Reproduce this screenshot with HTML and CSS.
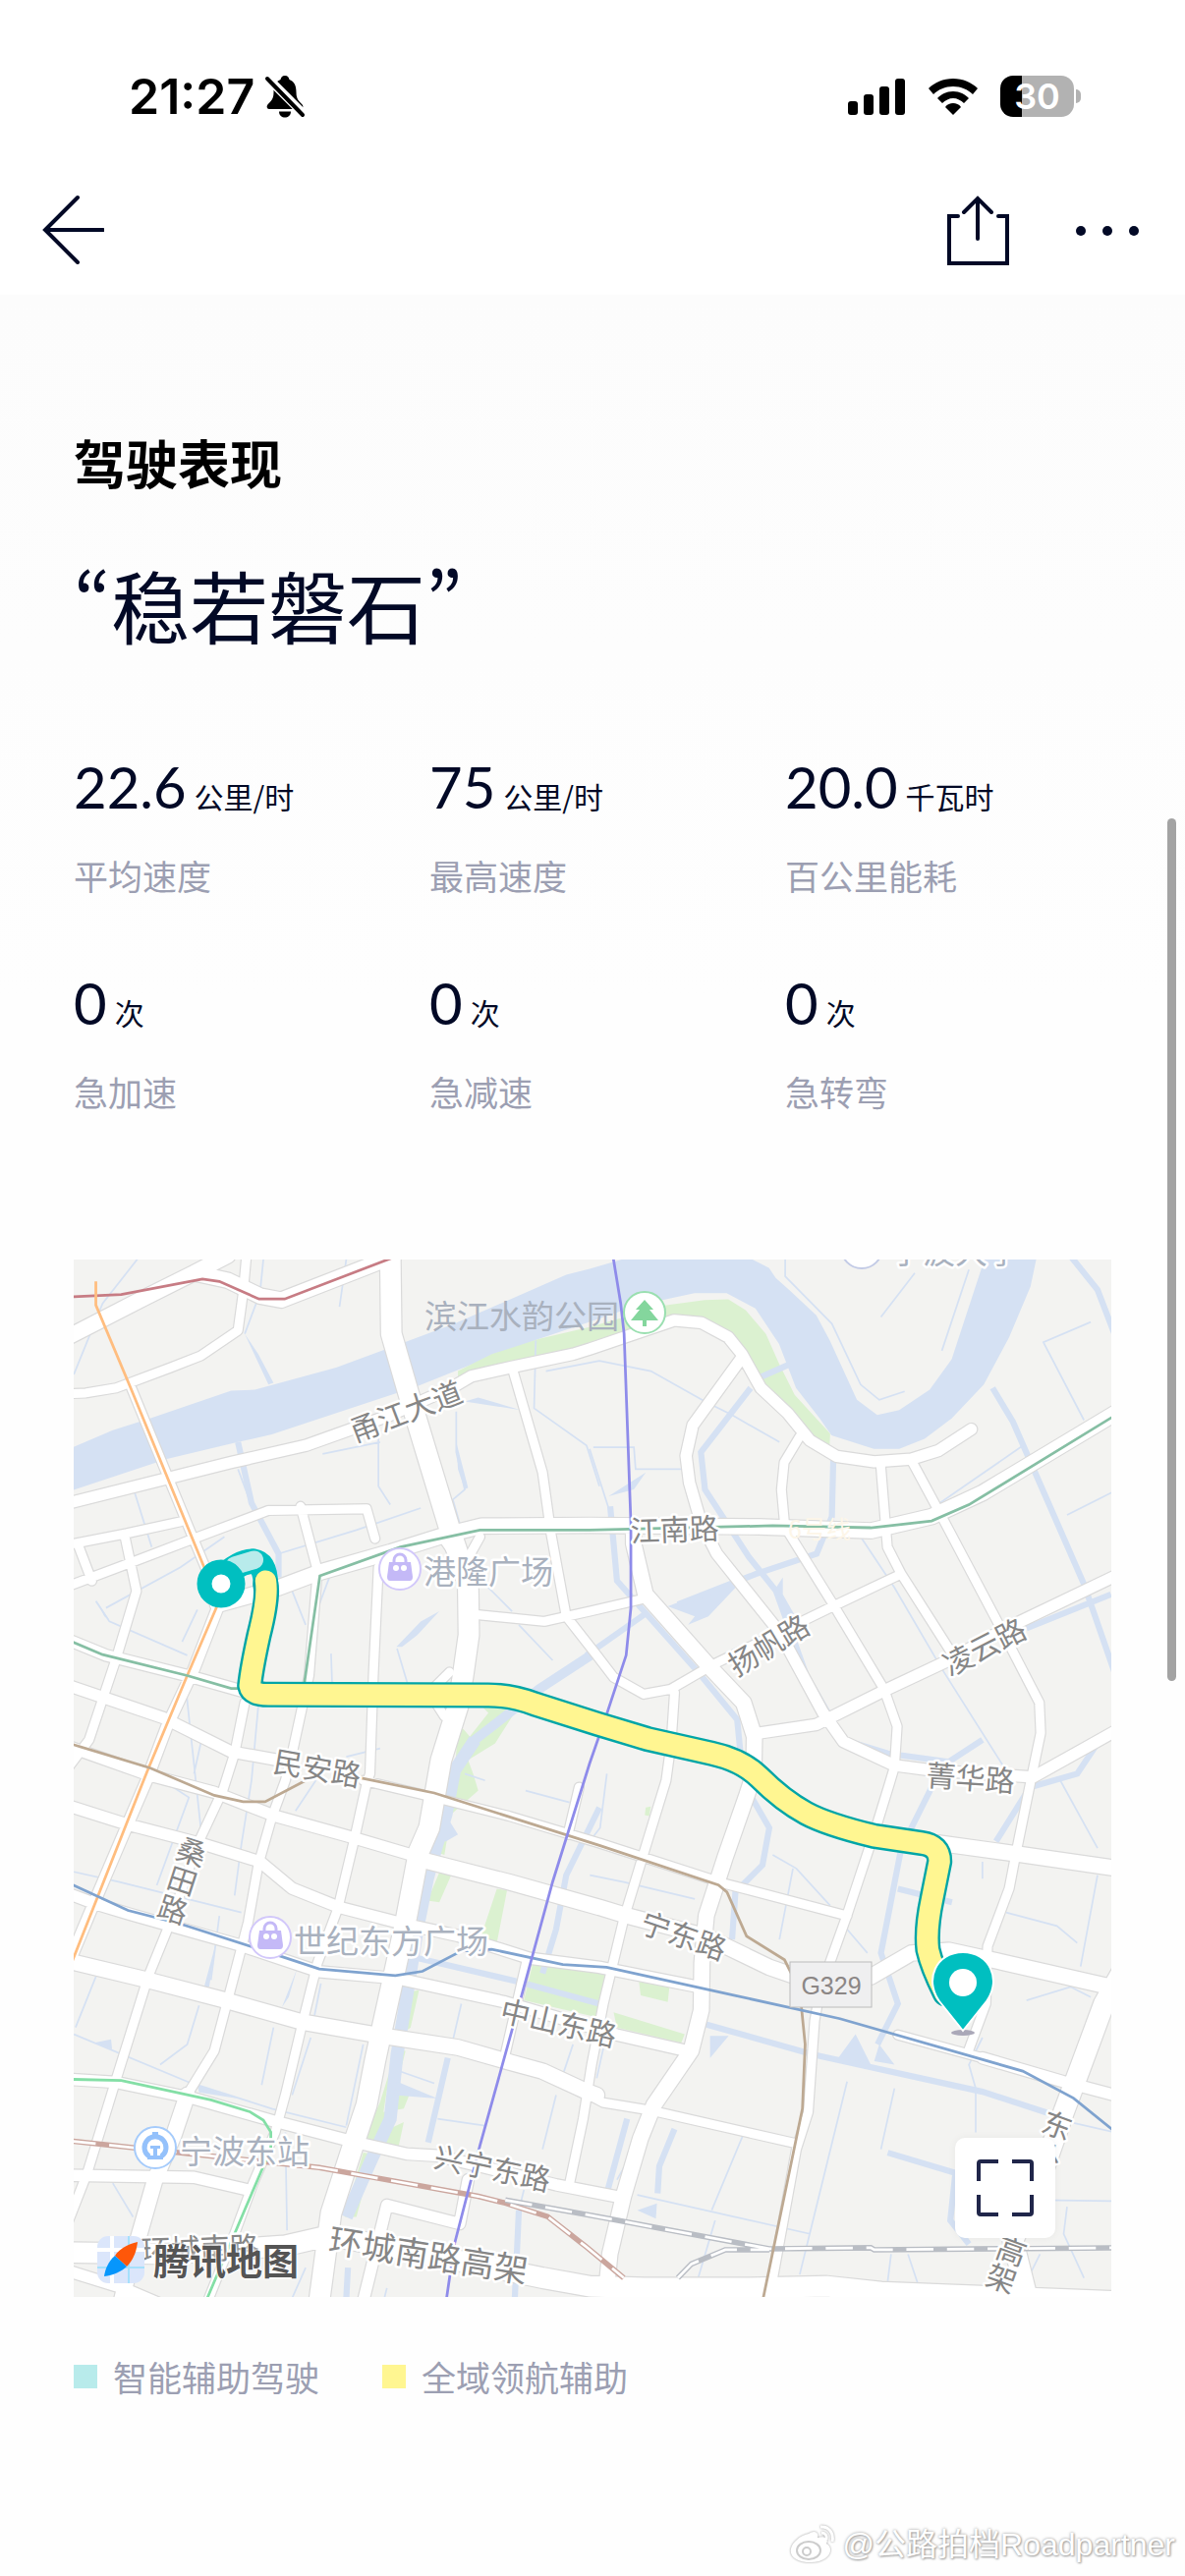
FILE: index.html
```html
<!DOCTYPE html>
<html lang="zh-CN">
<head>
    <meta charset="UTF-8" />
    <meta name="viewport" content="width=device-width, initial-scale=1.0" />
    <title>驾驶表现</title>
    <link rel="stylesheet" href="styles.css">
</head>
<body>
    <header class="top">
        <div class="status-bar">
            <div class="status-left">
                <span class="clock">21:27</span>
                <svg class="bell" viewBox="0 0 42 44" width="42" height="44">
                    <path d="M21 1c-3 0-4 2-4.500 4C11 7 9.500 12 9.500 18c0 7-3 9-6.500 13-1 2 0 4 2 4h32c2 0 3-2 2-4-3.500-4-6.500-6-6.500-13 0-6-1.500-11-7-13-.5-2-1.500-4-4.500-4zM15 37.500h12c0 4-3 6-6 6s-6-2-6-6z" />
                    <path class="cut" d="M3 3L41 41" />
                    <path class="slash" d="M3 4L39 41" />
                </svg>
            </div>
            <div class="status-right">
                <svg viewBox="0 0 59 38" width="59" height="38">
                    <rect x="0" y="24" width="10" height="14" rx="3" />
                    <rect x="16" y="17" width="10" height="21" rx="3" />
                    <rect x="32" y="9" width="10" height="29" rx="3" />
                    <rect x="48" y="1" width="10" height="37" rx="3" />
                </svg>
                <svg viewBox="0 0 52 38" width="52" height="38">
                    <path d="M26 1C16 1 7 5 1 11l5 6C11 12 18 9 26 9s15 3 20 8l5-6C45 5 36 1 26 1z" />
                    <path d="M26 14c-7 0-12 3-16 7l5 5c3-3 7-5 11-5s8 2 11 5l5-5c-4-4-9-7-16-7z" />
                    <path d="M26 26c-3 0-6 1-8 4l8 8 8-8c-2-3-5-4-8-4z" />
                </svg>
                <div class="battery"><span>30</span></div>
            </div>
        </div>
        <nav class="nav-bar">
            <button class="icon-btn" aria-label="返回">
                <svg viewBox="0 0 64 72" width="64" height="72"><path d="M37 3L4 36l33 33M4 36h59" /></svg>
            </button>
            <div class="nav-actions">
                <button class="icon-btn" aria-label="分享">
                    <svg viewBox="0 0 64 72" width="64" height="72"><path d="M12 22H3v48h59V22H53M32 45V4M18 18L32 4l14 14" /></svg>
                </button>
                <button class="icon-btn dots" aria-label="更多">
                    <svg viewBox="0 0 66 72" width="66" height="72"><circle cx="6" cy="37" r="5" /><circle cx="33" cy="37" r="5" /><circle cx="60" cy="37" r="5" /></svg>
                </button>
            </div>
        </nav>
    </header>

    <main class="content">
        <h1>驾驶表现</h1>
        <p class="rating">“稳若磐石”</p>

        <dl class="stats">
            <div class="stat"><dd>22.6<span>公里/时</span></dd><dt>平均速度</dt></div>
            <div class="stat"><dd>75<span>公里/时</span></dd><dt>最高速度</dt></div>
            <div class="stat"><dd>20.0<span>千瓦时</span></dd><dt>百公里能耗</dt></div>
            <div class="stat"><dd>0<span>次</span></dd><dt>急加速</dt></div>
            <div class="stat"><dd>0<span>次</span></dd><dt>急减速</dt></div>
            <div class="stat"><dd>0<span>次</span></dd><dt>急转弯</dt></div>
        </dl>

        <div class="map">
            <svg class="map-canvas" viewBox="0 0 1056 1056">
                <defs>
                    <!-- roads, by width: drawn once as casing and once as surface -->
                    <path id="roads-s" d="M525 10L515 120L500 230L390 305L300 340L140 400L50 415L0 417M185 400L300 680L370 850L420 970M0 985L200 910L370 845L590 762L880 757L905 845M0 863L170 830L330 795M165 835L200 1000L140 1200L60 1440L0 1520M30 870L68 970M685 750L735 940L710 1250L660 1480L640 1560L600 1669L560 1809L530 1979L475 2189L430 2359L350 2489M915 930L900 1250L890 1540L880 1569L845 1729L795 1939L735 2099L690 2279L640 2489L610 2599L545 2750L490 2900L410 3100M520 1330L490 1480L455 1590L380 1750L300 1979L235 2139L135 2459L55 2719L0 2860M1508 1580L1475 1720M1355 2085L1285 2390M1790 1300L1780 1450L1765 1560L1710 1739L1640 1969L1580 2219L1545 2400L1520 2560L1480 2750M2159 545L2114 620L2106 700L2116 810L2259 1040L2409 1290L2448 1400L2440 1520L2425 1570L2385 1700L2299 1960L2220 2180L2204 2270L2185 2540L2150 2650L2068 3100M2399 625L2419 870L2460 950L2610 1185M2489 612L2585 790L2749 1100L2868 1330L2872 1420L2845 1550L2800 1770L2779 1879L2715 2050L2710 2220L2660 2355M2459 950L2259 1045L1909 1215L1779 1290L1699 1305L1610 1255L1560 1190L1470 1075L1425 830L1400 650L1310 340M1205 1070L1405 1090L1539 1060L1690 1025M1125 1240L1065 1300L1110 1370M1110 850L1165 930L1215 840M870 1560L1080 1610L1300 1665L1568 1745L1939 1865L2300 1960M2450 2312L2700 2380M1539 2490L1579 2512L1720 2535L2145 2632" />
                    <path id="roads-m" d="M0 740L280 670L480 620L700 570L840 520L950 480L1130 400L1190 365L1310 338L1490 300L1539 285L1789 200L1869 207L1949 250L1989 300L2045 400L2125 475L2190 555L2269 602L2380 618L2490 610L2570 585L2667 522M440 1050L370 1230L290 1400L230 1560L170 1699L65 1945L0 2100M0 1145L110 1190L350 1250L510 1295M0 1280L280 1375L480 1475L620 1500M0 1635L170 1689L400 1749L565 1800L660 1879L800 1935L990 1984L1150 2019L1360 2085L1568 2112L1860 2170M0 1460L240 1545L430 1595L610 1665L840 1729L1030 1785M0 1895L80 1925L180 1955L500 2045L740 2125L970 2145L1290 2215L1620 2312L1830 2360M0 2443L140 2452L370 2500L600 2565L850 2630L1000 2664L1090 2669L1440 2755L1620 2790M0 2727L370 2733L530 2770M1180 2740L1155 2870L940 2815L870 3100M1989 310L1844 510L1824 600L1834 680L1869 800L1915 890L2099 1120L2229 1360L2289 1445L2439 1515L2550 1530L2850 1550L3100 1410M2039 1420L2209 1395L2419 1290L2600 1205L2770 1110L3100 952M2700 2380L2939 2450L3100 2492M0 3010L160 3060L300 3120" />
                    <path id="roads-l" d="M0 248L220 135L370 60L470 82L565 128L628 140L880 42L960 10M370 60L470 8M440 1040L620 990L740 945L950 885L1110 835L1220 808L1539 806L2040 810L2370 822L2550 780L2700 710L3100 470M1669 830L1669 860L1704 1010L1899 1230L1994 1330L2026 1430L2024 1540L2005 1600L1939 1789L1884 1959L1871 2099L1869 2239L1839 2359L1729 2519L1689 2619L1639 2789L1599 2959L1589 3060M1040 1794L1300 1860L1568 1935L1650 1960L1880 2020L2070 2112L2180 2150L2370 2140L2490 2070L2600 2062L2750 2095L3100 2175M2569 1745L2809 1778L3100 1820M0 2094L230 2149L460 2209L690 2274L920 2314L1150 2349L1290 2389L1400 2419L1530 2479L1560 2490M350 2490L310 2609L255 2739L215 2879L180 3000L155 3100" />
                    <path id="roads-xl" d="M950 0L953 240L1005 420L1125 815L1180 980L1182 1130L1165 1250L1150 1340L1100 1500L1065 1700L1035 1769L995 1979L960 2139L920 2319L905 2389L880 2519L840 2639L775 2839L740 3100M0 2955L300 2959L640 2935L770 2905L980 2945L1180 2985L1400 3030L1539 3055L1700 3060L2000 3060L2240 3055L2400 3072L2600 3080L3100 3100M3110 2130L3059 2220L2985 2420L2940 2540L2870 2740L2790 2920L2830 3080" />
                </defs>

                <g transform="translate(-5 -7) scale(.3444)">
                    <!-- water and parks -->
                    <path class="water" d="M0 580L130 525L240 490L480 408L550 405L790 340L1000 262L1140 210L1470 65L1539 48L1669 10H2000L2069 45L2089 75L2129 110L2209 185L2249 260L2329 435L2389 480L2454 465L2544 405L2609 315L2709 10H2861L2842 100L2779 250L2704 390L2609 490L2529 550L2454 580H2379L2254 540L2219 490L2149 400L2099 270L2029 165L1944 120H1849L1754 140L1640 170L1539 205L1390 255L1180 335L1030 395L600 537L500 560L290 610L0 706z" />
                    <path class="park" d="M1150 350L1250 300L1390 255L1539 220L1765 155L1879 140L1949 138L2000 170L2060 240L2100 330L2145 420L2250 535L2248 575L2190 560L2040 400L1989 290L1949 250L1869 207L1780 210L1310 330L1190 365L1150 375z" />
                    <path class="park" d="M1150 1390L1185 1430L1240 1360L1220 1340H1330L1260 1450L1180 1500L1195 1540L1210 1590L1130 1660L1110 1780L1080 1770L1130 1600L1140 1560zM1100 1820L1130 1840L1095 1920L1060 1915zM1265 1880L1295 1885L1265 2040L1215 2030zM1370 2105L1610 2130L1560 2260L1345 2210zM1005 2185L1035 2180L1010 2290L970 2320zM970 2350L995 2360L960 2500L925 2600L990 2570L975 2640L870 2625L920 2510zM1610 2245L1820 2310L1810 2335L1620 2290zM1685 2155L1775 2170L1770 2215L1690 2195zM870 2660L900 2665L850 2850H815zM1010 2480L940 2475L930 2540L990 2530zM1705 1640L1720 1637L1715 1665L1702 1662z" />
                    <path class="canal wide" d="M1200 1440L1140 1530L1115 1660L1085 1760L1060 1850L1030 2000L1000 2190L970 2370L950 2560L890 2690L820 2850" />
                    <path class="canal mid" d="M1550 1185L1390 1290L1290 1370L1200 1440L1140 1530" />
                    <path class="water" d="M1100 1640L1150 1720L1115 1740L1075 1740zM970 2450L1090 2500L960 2490zM1770 1045L1930 985L1980 980L1890 1075L1830 1100L1850 1075zM2325 2310L2270 2385L2370 2400zM2395 2340L2440 2400L2380 2390zM1895 2315H1950L1895 2380zM1680 2830L1738 2810L1735 2855zM968 1165L1040 1090L1095 1060L1030 1130L985 1165zM80 1025L120 1085L105 1075zM590 390L520 240L560 300L605 385zM1170 700L1150 640L1145 560L1180 695zM1595 720L1705 650L1670 700zM1170 440L1210 428L1335 465zM75 2335L125 2325L128 2355zM380 2460L500 2500L385 2482zM400 2170L435 2040L415 2170zM630 2230L675 2115L650 2200zM2090 990L2110 960V1010L2150 1080L2115 1090z" />
                    <path class="canal" d="M2260 580L2255 780L2210 890L2030 950L1800 1040M2130 330L2040 370M2015 400L1868 590L1880 700L2010 900L2090 1000L2180 1250L2290 1440L2420 1480L2600 1505L2700 1440M2730 400L2790 500L3000 980L3090 1240M2960 10L3040 110L3090 240M1600 750L1620 970L1700 1060L1860 1240L1975 1380L1985 1480M1700 1070L1530 1190M2550 1580L2460 1760L2400 2070L2450 2220L2390 2340M1880 2280L2200 2370L2700 2480L2900 2545M2420 2660L2620 2720L2605 2860L2660 2930M1030 2085L1330 2155L1568 2220M1120 2380L1062 2630M1568 1640L1470 1840L1440 2000L1400 2130M2018 1610L2070 1700L2050 1810L1970 1890L1960 2030M1330 2830L1318 3090M1650 2560L1590 2780M1790 2590L1745 2700L1740 2780M825 3000L820 3090M500 560L540 740L620 890V960M2450 1880L2610 1920M2830 1110L3080 1010M2740 1740L2840 1580L2980 1540L3060 1420" />
                    <path class="canal thin" d="M210 10L100 150L15 360M575 20L565 120L520 240M820 20L800 160M195 710L245 870M620 890L850 820L1040 755M500 640L545 760M110 1050L330 930L460 840M80 1030L120 1090L350 1190M380 1055L335 1150M740 1040L770 960M660 1000L700 1100M775 1185L778 1270M970 1170L1000 1270M915 500V690L950 745M1145 470V590L1170 700L1135 730L1155 800M1380 260L1375 460L1530 570L1568 690M750 595L920 560M1230 980L1310 1060M1330 1100L1430 1205M1410 350L1568 320L1720 350L1880 440L1960 480L2100 560M1550 575H1670L1675 640H1810M1539 580L1600 770M2117 20V70L2255 210L2340 390L2395 435L2470 410M2660 50L2580 290M2500 60L2400 190M3020 205L2880 265L3000 495M2545 760L2820 570M2950 775L3090 705M2340 840L2440 990L2580 1230L2760 1515M270 1555L355 1610L260 1870M15 1830L150 1860L510 1950M340 1230L390 1700M390 1450L370 1540M560 1340L540 1560L510 1750L490 1900M730 1560L670 1650M820 1490L920 1465M1350 1590L1480 1625M445 1960L420 2150M80 2140L20 2290M15 2310L350 2450L600 2530L820 2585M385 2225L350 2340L270 2400M605 2290L570 2460M745 2160L725 2260M870 2340L820 2580M715 2320L660 2490M1160 2220L1130 2350M980 2420L1080 2455M1090 2560L1230 2580M1440 2490L1400 2650M1490 2340L1460 2430M130 2750L190 2850M640 2600L645 2890M1345 2770L1330 2830M2140 1820L2100 2030M2080 1780L2150 1820L2250 1930M2300 2000L2360 2070M1540 1840L1640 1860L1850 1910M2000 2590L1900 2830M2300 2450L2160 3020M2440 2470L2400 2650M1680 2785L2190 2900M1910 2860L1860 3030M1590 1540L1570 1700L1539 1740M2930 1560L3040 1760M2770 1950L2920 1990L2980 2040M2830 2210L2960 2170L3020 2200M3040 1840L2990 2110M2700 2320L2660 2400L2680 2470V2600M1560 2440L1580 2350M1700 2600L1620 2740M2430 2960L2420 3040M2480 2960L2510 3050M2950 2820L2940 2900L3000 3030M2880 2800L3090 2803M2960 2570L3090 2600M2870 2960L2840 3020M2700 1800V1850M1230 1560L1170 1540M700 3000L660 3090M940 3060L930 3100" />

                    <use href="#roads-s" class="road casing s" />
                    <use href="#roads-m" class="road casing m" />
                    <use href="#roads-l" class="road casing l" />
                    <use href="#roads-xl" class="road casing xl" />
                    <use href="#roads-s" class="road s" />
                    <use href="#roads-m" class="road m" />
                    <use href="#roads-l" class="road l" />
                    <use href="#roads-xl" class="road xl" />

                    <!-- railways -->
                    <path class="rail brick" d="M0 2625L740 2704L850 2724L1210 2789L1290 2809L1415 2849L1530 2939L1640 3030" />
                    <path class="rail grey" d="M1290 2800L1568 2850L2070 2944L2370 2941L2380 2947L3100 2941M1800 3030L1840 2989L1940 2947H2070" />
                    <path class="rail gap" d="M0 2625L740 2704L850 2724L1210 2789L1290 2809L1415 2849L1530 2939L1640 3030M1290 2800L1568 2850L2070 2944L2370 2941L2380 2947L3100 2941M1800 3030L1840 2989L1940 2947H2070" />

                    <!-- metro lines -->
                    <g class="metro">
                        <path stroke="#c77c84" d="M0 131L155 124L395 78L445 85L562 137H638L970 10" />
                        <path stroke="#ffbd7f" d="M80 85V155L185 405L400 930L440 1040L350 1250L235 1525L215 1575L85 1905L10 2095" />
                        <path stroke="#86bfa4" d="M0 1146L100 1188L350 1250L480 1288H510M695 1280L742 955L980 870L1215 820H1539L2080 807L2370 813L2550 793L2660 745L3100 476" />
                        <path stroke="#bda992" d="M0 1450L240 1523L430 1604L515 1623H580L700 1560M865 1553L1080 1597L1568 1752L1920 1869L1945 1890L2003 2020L2115 2090L2160 2180L2176 2340L2168 2530L2050 3100" />
                        <path stroke="#7fa3cf" d="M0 1863L175 1944L330 1984L540 2051L740 2117L965 2137L1045 2124L1160 2064L1250 2059L1460 2104L1589 2112L2279 2264L2819 2419L2969 2499L3100 2605" />
                        <path stroke="#8e8bea" d="M1608 10L1631 150L1641 240L1661 800V1050L1647 1190L1591 1360L1539 1510L1430 1859L1340 2189L1215 2639L1140 2929L1115 3100" />
                        <path stroke="#84dfa6" d="M0 2443L155 2447L420 2504L535 2539L575 2564L597 2599V2649L520 2829L405 3100" />
                    </g>

                    <!-- driven route -->
                    <path class="route start" d="M450 965Q500 912 545 912Q582 918 582 985" />
                    <path class="route edge" d="M582 980Q590 1020 562 1130Q540 1230 535 1280Q540 1306 590 1306L1240 1308Q1310 1308 1380 1335L1560 1392L1709 1437L1900 1480Q1990 1500 2040 1550Q2110 1620 2179 1657Q2240 1690 2379 1724L2520 1745Q2574 1752 2573 1800L2551 1910Q2532 2000 2539 2060Q2550 2110 2590 2190" />
                    <path class="route assist" d="M490 925L548 908" />
                    <path class="route pilot" d="M582 970Q590 1020 562 1130Q540 1230 535 1280Q540 1306 590 1306L1240 1308Q1310 1308 1380 1335L1560 1392L1709 1437L1900 1480Q1990 1500 2040 1550Q2110 1620 2179 1657Q2240 1690 2379 1724L2520 1745Q2574 1752 2573 1800L2551 1910Q2532 2000 2539 2060Q2550 2110 2590 2190" />
                </g>

                <g class="road-name">
                    <text transform="translate(342 165) rotate(-21)">甬江大道</text>
                    <text transform="translate(612 286) rotate(-2)">江南路</text>
                    <text transform="translate(713 402) rotate(-31)">扬帆路</text>
                    <text transform="translate(932 404) rotate(-27)">凌云路</text>
                    <text transform="translate(912 539) rotate(4)">菁华路</text>
                    <text transform="translate(246 529) rotate(10)">民安路</text>
                    <g transform="translate(107 643) rotate(18)"><text y="-31">桑</text><text>田</text><text y="31">路</text></g>
                    <text transform="translate(617 699) rotate(19)">宁东路</text>
                    <text transform="translate(491 788) rotate(13)">中山东路</text>
                    <text transform="translate(424 936) rotate(12)">兴宁东路</text>
                    <text transform="translate(129 1018) rotate(-2)">环城南路</text>
                    <text class="big" transform="translate(359 1026) rotate(9)">环城南路高架</text>
                    <g transform="translate(997 892) rotate(20)"><text>东</text><text y="33">外</text><text y="66">环</text><text y="100">路</text><text y="136">高</text><text y="166">架</text></g>
                </g>
                <text class="line-name" x="759" y="284">6号线</text>

                <g class="place">
                    <text x="357" y="70">滨江水韵公园</text>
                    <text x="356" y="330">港隆广场</text>
                    <text x="224" y="706">世纪东方广场</text>
                    <text x="108" y="920">宁波东站</text>
                    <text x="831" y="4">宁波大学</text>
                </g>

                <circle class="poi campus" cx="802" cy="-12" r="21" />
                <circle class="poi tree" cx="581" cy="54" r="21" />
                <path fill="#84d69d" d="M581 41l9 10h-4l9 11h-12v6h-4v-6h-12l9-11h-4z" />
                <g id="bag">
                    <circle class="poi shop" cx="332" cy="315" r="21" />
                    <path fill="none" stroke="#c4b9f7" stroke-width="3" d="M326 309v-3a6 6 0 0 1 12 0v3" />
                    <path fill="#c4b9f7" d="M321 308h22l2 15q0 4-3 4h-20q-3 0-3-4z" />
                    <circle fill="#fff" cx="328" cy="314" r="3" /><circle fill="#fff" cx="336" cy="314" r="3" />
                </g>
                <use href="#bag" x="-132" y="375" />
                <circle class="poi station" cx="83" cy="904" r="21" />
                <path fill="none" stroke="#94c1fb" stroke-width="5" d="M77 913a11 11 0 1 1 12 0" />
                <path fill="#94c1fb" d="M80 888h6v5h-6zM78 902h10v3h-3v7h6v4H75v-4h6v-7h-3z" />

                <rect x="729" y="715" width="83" height="46" fill="#efeff0" stroke="#bcbcbc" />
                <text class="shield" x="771" y="748">G329</text>

                <!-- start and end markers -->
                <circle cx="150" cy="330" r="17" fill="#fff" stroke="#00bfc0" stroke-width="15" />
                <ellipse cx="905" cy="787" rx="12" ry="3" fill="#aaa8b8" />
                <path fill="#00bfc0" stroke="#fff" stroke-width="2" d="M905 785L881 755C865 733 878 705 905 705S945 733 929 755z" />
                <circle cx="905" cy="736" r="14" fill="#fff" />
            </svg>

            <div class="map-brand">
                <svg viewBox="0 0 48 48" width="48" height="48">
                    <rect width="48" height="48" rx="11" fill="#dbe6fb" />
                    <path stroke="#fff" stroke-width="4" d="M15 0v48M0 14h48" />
                    <path stroke="#a5e0fc" stroke-width="2" d="M0 32h48M32 0v48" />
                    <path fill="#fe5709" d="M41 6C32 8 22 13 18 20l12 11C37 24 40 15 41 6z" />
                    <path fill="#0696fc" d="M18 20C11 26 8 34 7 41c9-1 18-5 23-10z" />
                </svg>
                <span>腾讯地图</span>
            </div>
            <button class="expand-btn" aria-label="全屏">
                <svg viewBox="0 0 60 60" width="60" height="60"><path d="M23 3H5Q3 3 3 5v18M37 3h18q2 0 2 2v18M57 37v18q0 2-2 2H37M23 57H5q-2 0-2-2V37" /></svg>
            </button>
        </div>

        <ul class="legend">
            <li><i class="swatch assist"></i>智能辅助驾驶</li>
            <li><i class="swatch pilot"></i>全域领航辅助</li>
        </ul>
    </main>

    <footer class="credit">
        <svg viewBox="0 0 50 44" width="50" height="44">
            <path d="M21 11c5-4 11-2 9 4 7-2 12 1 9 6 9 5 3 19-16 19C9 40 1 34 3 26c1-6 10-14 18-15z" />
            <path class="wave" d="M33 4c8-1 14 6 12 15M34 10c4 0 6 3 5 7" />
            <ellipse class="eye" cx="21" cy="28" rx="12" ry="9" /><circle class="eye" cx="19" cy="29" r="4" />
        </svg>
        <span>@公路拍档Roadpartner</span>
    </footer>
    <div class="scroll-thumb"></div>
</body>
</html>
```
FILE: styles.css
```css
:root {
    --ink: #020926;
    --muted: #9c9fb2;
    --teal: #00bfc0;
    --assist: #b8ebeb;
    --pilot: #fff691;
}

* {
    box-sizing: border-box;
    margin: 0;
    padding: 0;
}

body {
    position: relative;
    display: flex;
    flex-direction: column;
    min-height: 100vh;
    font-family: "Noto Sans CJK SC", "Noto Sans", sans-serif;
    color: var(--ink);
    background: #fefefe;
}

svg {
    display: block;
}

button {
    border: none;
    background: none;
    cursor: pointer;
}

/* status bar and navigation */
.top {
    background: #fff;
}

.status-bar {
    display: flex;
    justify-content: space-between;
    align-items: center;
    height: 156px;
    padding: 40px 113px 0 131px;
}

.status-left,
.status-right,
.nav-actions {
    display: flex;
    align-items: center;
}

.status-left {
    gap: 10px;
}

.status-right {
    gap: 22px;
}

.clock {
    font: 600 50px/60px Inter, sans-serif;
    color: #000;
}

.bell .cut {
    stroke: #fff;
    stroke-width: 9;
}

.bell .slash {
    stroke: #000;
    stroke-width: 4;
    stroke-linecap: round;
}

.battery {
    position: relative;
    width: 75px;
    height: 42px;
    border-radius: 13px;
    background: linear-gradient(90deg, #000 30%, #b2b2b2 30%);
    font: 600 36px/42px Inter, sans-serif;
    color: #fff;
    text-align: center;
}

.battery::after {
    content: "";
    position: absolute;
    left: 77px;
    top: 14px;
    width: 5px;
    height: 14px;
    border-radius: 0 5px 5px 0;
    background: #b2b2b2;
}

.nav-bar {
    display: flex;
    justify-content: space-between;
    align-items: flex-start;
    height: 144px;
    padding: 30px 46px 0 42px;
}

.nav-actions {
    gap: 67px;
}

.icon-btn svg {
    margin-top: 12px;
    fill: none;
    stroke: var(--ink);
    stroke-width: 4;
    stroke-linecap: round;
}

.icon-btn.dots svg {
    fill: var(--ink);
    stroke: none;
}

/* summary */
.content {
    padding: 130px 75px 0;
    background: linear-gradient(#fcfcfc, #fefefe 720px);
}

h1 {
    font-size: 53px;
    line-height: 80px;
    font-weight: 700;
    color: #000;
}

.rating {
    margin-top: 44px;
    font-size: 80px;
    line-height: 120px;
    font-feature-settings: "pwid";
}

.stats {
    display: grid;
    grid-template-columns: repeat(3, 1fr);
    gap: 64px 30px;
    margin-top: 87px;
}

.stat {
    display: flex;
    flex-direction: column;
    gap: 24px;
}

.stat dd {
    display: flex;
    align-items: baseline;
    gap: 8px;
    height: 80px;
    font-family: Lato, "Noto Sans CJK SC", sans-serif;
    font-size: 58px;
    line-height: 80px;
    white-space: nowrap;
}

.stat dd span {
    font-family: "Noto Sans CJK SC", sans-serif;
    font-size: 30px;
    line-height: 44px;
}

.stat dt {
    font-size: 35px;
    line-height: 52px;
    color: var(--muted);
}

/* map */
.map {
    position: relative;
    margin-top: 145px;
}

.map-canvas {
    width: 100%;
    height: auto;
    overflow: hidden;
    background: #f3f3f1;
}

.water {
    fill: #d5e1f3;
}

.park {
    fill: #dbf1d0;
}

.canal {
    fill: none;
    stroke: #d5e1f3;
    stroke-width: 18;
}

.canal.wide {
    stroke-width: 38;
}

.canal.mid {
    stroke-width: 28;
}

.canal.thin {
    stroke-width: 5;
}

.road {
    fill: none;
    stroke: #fff;
    stroke-linejoin: round;
    stroke-linecap: round;
}

.road.s { stroke-width: 26; }
.road.m { stroke-width: 33; }
.road.l { stroke-width: 45; }
.road.xl { stroke-width: 60; }

.road.casing { stroke: #dadada; }
.road.casing.s { stroke-width: 33; }
.road.casing.m { stroke-width: 40; }
.road.casing.l { stroke-width: 52; }
.road.casing.xl { stroke-width: 67; }

.rail {
    fill: none;
    stroke-width: 16;
}

.rail.brick { stroke: #cba69e; }
.rail.grey { stroke: #b9bdc4; }

.rail.gap {
    stroke: #fff;
    stroke-width: 8;
    stroke-dasharray: 80 40;
}

.metro path {
    fill: none;
    stroke-width: 8;
}

.route {
    fill: none;
    stroke-linejoin: round;
    stroke-linecap: round;
}

.route.start {
    stroke: var(--teal);
    stroke-width: 74;
}

.route.edge {
    stroke: #00a5a7;
    stroke-width: 76;
}

.route.assist {
    stroke: var(--assist);
    stroke-width: 54;
}

.route.pilot {
    stroke: var(--pilot);
    stroke-width: 62;
}

.road-name text,
.line-name,
.place text {
    stroke: #fff;
    stroke-width: 5;
    stroke-linejoin: round;
    paint-order: stroke;
}

.road-name text {
    font-size: 30px;
    fill: #868686;
    text-anchor: middle;
}

.road-name .big {
    font-size: 34px;
}

.line-name {
    font-size: 25px;
    fill: #fdf6e8;
    text-anchor: middle;
    stroke: none;
}

.place text {
    font-size: 33px;
    fill: #a9b1be;
}

.place text:first-child {
    stroke: none;
}

.poi {
    fill: #fff;
    stroke-width: 2;
}

.poi.campus { stroke: #c3cbe6; }
.poi.tree { stroke: #9adfb0; }
.poi.shop { stroke: #d2c8fa; }
.poi.station { stroke: #a5cbfb; }

.shield {
    font-family: "Liberation Sans", sans-serif;
    font-size: 25px;
    fill: #8b8685;
    text-anchor: middle;
}

.map-brand {
    position: absolute;
    left: 24px;
    bottom: 14px;
    display: flex;
    align-items: center;
    gap: 9px;
    font-size: 37px;
    line-height: 48px;
    font-weight: 700;
    color: #555;
    text-shadow: 0 0 3px #fff, 0 0 3px #fff, 0 0 3px #fff;
}

.expand-btn {
    position: absolute;
    right: 57px;
    bottom: 60px;
    display: grid;
    place-items: center;
    width: 102px;
    height: 102px;
    border-radius: 10px;
    background: #fff;
    box-shadow: 0 0 8px rgba(0, 0, 0, 0.05);
}

.expand-btn svg {
    fill: none;
    stroke: #20264a;
    stroke-width: 4;
}

/* legend */
.legend {
    display: flex;
    gap: 64px;
    margin-top: 55px;
    list-style: none;
    font-size: 35px;
    line-height: 52px;
    color: var(--muted);
}

.legend li {
    display: flex;
    align-items: center;
    gap: 16px;
}

.swatch {
    width: 24px;
    height: 24px;
}

.swatch.assist { background: var(--assist); }
.swatch.pilot { background: var(--pilot); }

.credit {
    display: flex;
    justify-content: flex-end;
    align-items: center;
    gap: 6px;
    margin-top: auto;
    padding: 0 10px 8px 0;
    font: 32px/48px "Liberation Sans", "Noto Sans CJK SC", sans-serif;
    color: #fff;
    text-shadow: 0 0 3px #999, 1px 1px 2px #aaa;
}

.credit svg {
    fill: #fff;
    filter: drop-shadow(0 0 1px #999);
}

.credit .eye {
    fill: none;
    stroke: #ccc;
    stroke-width: 2;
}

.credit .wave {
    fill: none;
    stroke: #fff;
    stroke-width: 3;
}

.scroll-thumb {
    position: absolute;
    right: 9px;
    top: 833px;
    width: 9px;
    height: 878px;
    border-radius: 5px;
    background: #a3a3a3;
}
```
